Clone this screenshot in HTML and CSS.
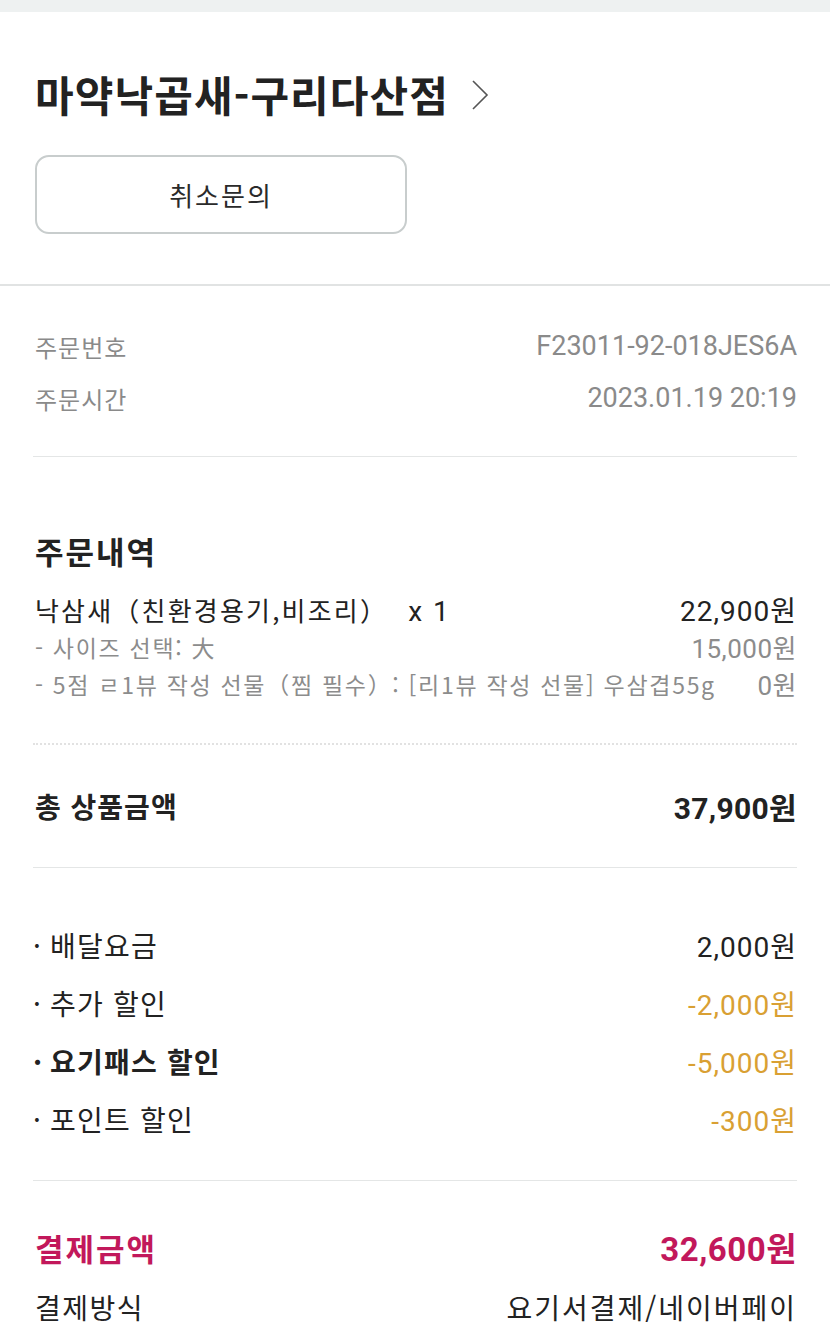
FILE: index.html
```html
<!DOCTYPE html>
<html lang="ko">
<head>
<meta charset="utf-8">
<link rel="stylesheet" href="styles.css">
</head>
<body>
<div class="topbar"></div>
<section class="header">
  <div class="title-row">
    <h1 class="title">마약낙곱새-구리다산점</h1>
    <svg class="chev" width="20" height="32" viewBox="0 0 20 32"><polyline points="3,2 17,16 3,30" fill="none" stroke="#555" stroke-width="1.6"/></svg>
  </div>
  <button class="btn">취소문의</button>
</section>
<div class="thick-line"></div>
<section class="page">
  <div class="info">
    <div class="row info-row"><span>주문번호</span><span class="num">F23011-92-018JES6A</span></div>
    <div class="row info-row"><span>주문시간</span><span class="num">2023.01.19 20:19</span></div>
  </div>
  <hr class="line">
  <h2 class="sec-title">주문내역</h2>
  <div class="row item-row"><span>낙삼새（친환경용기,비조리）<span class="num qty">x 1</span></span><span class="num">22,900원</span></div>
  <div class="row sub-row"><span>- 사이즈 선택: 大</span><span class="num">15,000원</span></div>
  <div class="row sub-row"><span>- 5점 ㄹ1뷰 작성 선물（찜 필수）: [리1뷰 작성 선물] 우삼겹55g</span><span class="num">0원</span></div>
  <hr class="dots">
  <div class="row total-row"><span>총 상품금액</span><span class="num">37,900원</span></div>
  <hr class="line">
  <div class="fees">
    <div class="row fee-row"><span><span class="dot">·</span>배달요금</span><span class="num">2,000원</span></div>
    <div class="row fee-row"><span><span class="dot">·</span>추가 할인</span><span class="num disc">-2,000원</span></div>
    <div class="row fee-row strong"><span><span class="dot">·</span>요기패스 할인</span><span class="num disc">-5,000원</span></div>
    <div class="row fee-row"><span><span class="dot">·</span>포인트 할인</span><span class="num disc">-300원</span></div>
  </div>
  <hr class="line">
  <div class="pay">
    <div class="row pay-total"><span>결제금액</span><span class="num">32,600원</span></div>
    <div class="row pay-row"><span>결제방식</span><span class="method">요기서결제/네이버페이</span></div>
  </div>
</section>
</body>
</html>
```
FILE: styles.css
```css
* { box-sizing: border-box; }
html, body { margin: 0; padding: 0; background: #fff; }
body {
  width: 830px;
  font-family: "Noto Sans CJK KR", "Roboto", sans-serif;
  color: #222;
  overflow: hidden;
}
.num { font-family: "Roboto", "Noto Sans CJK KR", sans-serif; }
.topbar { height: 12px; background: #eef1f1; }
.header { padding: 58px 33px 50px 35px; }
.title-row { display: flex; align-items: center; gap: 21px; height: 48px; }
.title {
  margin: 0;
  font-size: 42px;
  font-weight: 700;
  letter-spacing: 1.1px;
  line-height: 48px;
  color: #222;
}
.chev { margin-top: 2px; }
.btn {
  margin-top: 37px;
  width: 372px;
  height: 79px;
  border: 2px solid #c8cdcd;
  border-radius: 14px;
  background: #fff;
  font-family: "Noto Sans CJK KR", sans-serif;
  font-size: 26px;
  color: #2a2a2a;
  letter-spacing: 2px;
  padding: 0;
}
.thick-line { height: 2px; background: #e1e3e3; }
.page { padding: 0 33px 0 33px; }
.info { padding-top: 34px; padding-bottom: 32px; }
.row { display: flex; justify-content: space-between; align-items: center; white-space: nowrap; }
.info-row { height: 52px; font-size: 24px; color: #8a8a8a; letter-spacing: 1px; padding-left: 2px; }
.info-row .num { letter-spacing: 0; font-size: 27px; }
.line { margin: 0; border: 0; border-top: 1px solid #e4e6e6; }
.sec-title { margin: 72px 0 0 2px; font-size: 31px; font-weight: 700; line-height: 44px; letter-spacing: 2px; }
.item-row { margin-top: 17px; height: 38px; font-size: 26px; color: #222; padding-left: 2px; letter-spacing: 2.2px; }
.item-row .num { letter-spacing: 1px; font-size: 28px; }
.item-row .qty { margin-left: 20px; letter-spacing: 2px; }
.sub-row { height: 37px; font-size: 23px; color: #8c8c8c; padding-left: 2px; letter-spacing: 1.7px; }
.sub-row .num { font-size: 26px; letter-spacing: 0.5px; }
.dots { margin: 41px 0 0 0; border: 0; border-top: 2px dotted #e2e2e2; }
.total-row { margin-top: 41px; height: 40px; font-size: 28px; font-weight: 700; padding-left: 2px; letter-spacing: 1px; }
.total-row .num { font-size: 30px; letter-spacing: 0.3px; }
.total-row + .line { margin-top: 41px; }
.fees { padding: 48px 0 32px 0; }
.fee-row { height: 58px; font-size: 28px; color: #222; letter-spacing: 1.2px; }
.fee-row .dot { display: inline-block; width: 17px; letter-spacing: 0; }
.fee-row .num { letter-spacing: 1px; font-size: 28px; }
.fee-row.strong span:first-child { font-weight: 700; }
.disc { color: #d9a033; }
.pay { padding-top: 36px; }
.pay-total { height: 60px; font-size: 31px; font-weight: 700; color: #c2185b; padding-left: 2px; letter-spacing: 2px; }
.pay-total .num { font-size: 33px; letter-spacing: 0.5px; }
.pay-row { height: 60px; font-size: 28px; color: #222; padding-left: 2px; letter-spacing: 1.5px; }
.pay-row .method { letter-spacing: 2px; }
```
